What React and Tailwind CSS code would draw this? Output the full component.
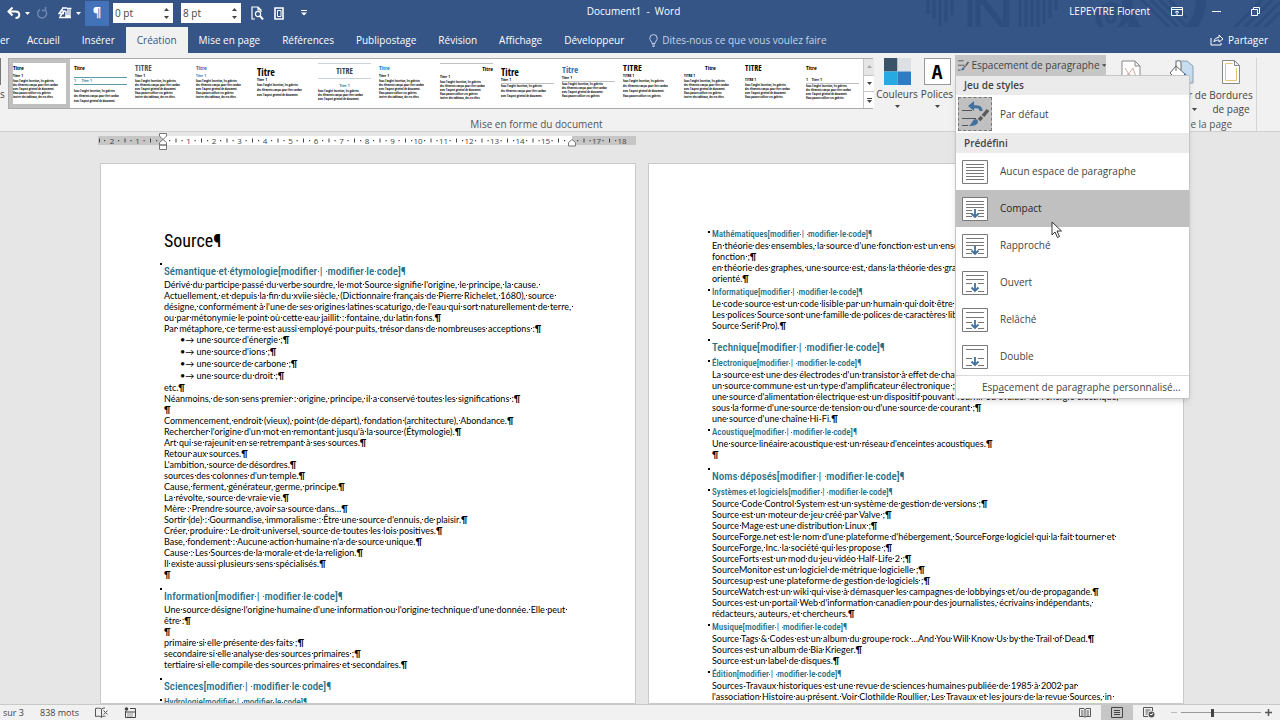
import { Fragment } from "react";
import clsx from "clsx";

const TABS = ["Accueil", "Insérer", "Création", "Mise en page", "Références", "Publipostage", "Révision", "Affichage", "Développeur"];

const SAMPLE = [
  "Sous l'onglet Insertion, les galeries",
  "des éléments conçus pour être cordon",
  "avec l'aspect général de document.",
  "Vous pouvez utiliser ces galeries",
  "insérer des tableaux, des en-têtes",
];

const STYLES = [
  { title: "Titre", t: "text-[6px]", sub: "Titre 1", selected: true },
  { title: "Titre", t: "text-[6px]", sub: "1      Titre 1", s: "border-y border-[#5b9aa8] text-[#2e7a93] mt-1 mb-1", rows: 3, loose: true },
  { title: "TITRE", t: "text-[8px] text-[#44546a]", sub: "Titre 1" },
  { title: "Titre", t: "text-[6px] text-[#2e74b5]", sub: "Titre 1", s: "text-[#2e74b5]" },
  { title: "Titre", t: "mt-1 text-[10px]", sub: "Titre 1", rows: 3, loose: true },
  { title: "TITRE", t: "text-[8px] text-center border-y border-[#c9d5de] py-0.5 text-[#333f50]", sub: "Titre 1", s: "text-center text-[#2e7a93] mt-1", rows: 3 },
  { title: "Titre", t: "text-[6px] text-[#2e74b5]", sub: "Titre 1" },
  { title: "Titre", t: "text-[6px] text-right border-t border-[#c0c0c0]", sub: "Titre 1", rows: 5 },
  { title: "Titre", t: "mt-1 text-[10px]", sub: "Titre 1", s: "border-b border-[#c0c0c0]", rows: 3, loose: true },
  { title: "Titre", t: "mt-0.5 text-[9px] text-[#2e74b5]", sub: "Titre 1", s: "border-b border-[#c0c0c0]", rows: 4 },
  { title: "TITRE", t: "text-[9px]", sub: "TITRE 1", rows: 4, loose: true },
  { title: "Titre", t: "text-[6px] text-center", sub: "TITRE 1" },
  { title: "TITRE", t: "text-[8px]", sub: "TITRE 1", s: "mt-1", rows: 4 },
  { title: "Titre", t: "text-[6px]", sub: "1    Titre 1", s: "mt-1 border-b border-[#c0c0c0]", rows: 4 },
];

const EDIT = "[modifier |\u00a0 modifier le code]";

const PAGE_1 = [
  ["h1", "Source"],
  ["h2", "Sémantique et étymologie" + EDIT],
  ["l", "Dérivé du participe passé du verbe sourdre, le mot Source signifie l'origine, le principe, la cause. "],
  ["l", "Actuellement, et depuis la fin du xviie siècle, (Dictionnaire français de Pierre Richelet, 1680), source "],
  ["l", "désigne, conformément à l'une de ses origines latines scaturigo, de l'eau qui sort naturellement de terre, "],
  ["p", "ou par métonymie le point où cette eau jaillit : fontaine, du latin fons."],
  ["p", "Par métaphore, ce terme est aussi employé pour puits, trésor dans de nombreuses acceptions :"],
  ["li", "une source d'énergie ;"],
  ["li", "une source d'ions ;"],
  ["li", "une source de carbone ;"],
  ["li", "une source du droit ;"],
  ["p", "etc."],
  ["p", "Néanmoins, de son sens premier : origine, principe, il a conservé toutes les significations :"],
  ["p", ""],
  ["p", "Commencement, endroit (vieux), point (de départ), fondation (architecture), Abondance."],
  ["p", "Rechercher l'origine d'un mot en remontant jusqu'à la source (Étymologie)."],
  ["p", "Art qui se rajeunit en se retrempant à ses sources."],
  ["p", "Retour aux sources."],
  ["p", "L'ambition, source de désordres."],
  ["p", "sources des colonnes d'un temple."],
  ["p", "Cause, ferment, générateur, germe, principe."],
  ["p", "La révolte, source de vraie vie."],
  ["p", "Mère : Prendre source, avoir sa source dans…"],
  ["p", "Sortir (de) : Gourmandise, immoralisme : Être une source d'ennuis, de plaisir."],
  ["p", "Créer, produire : Le droit universel, source de toutes les lois positives."],
  ["p", "Base, fondement : Aucune action humaine n'a de source unique."],
  ["p", "Cause : Les Sources de la morale et de la religion."],
  ["p", "Il existe aussi plusieurs sens spécialisés."],
  ["p", ""],
  ["h2", "Information" + EDIT],
  ["l", "Une source désigne l'origine humaine d'une information ou l'origine technique d'une donnée. Elle peut "],
  ["p", "être :"],
  ["p", ""],
  ["p", "primaire si elle présente des faits ;"],
  ["p", "secondaire si elle analyse des sources primaires ;"],
  ["p", "tertiaire si elle compile des sources primaires et secondaires."],
  ["h2", "Sciences" + EDIT],
  ["h3", "Hydrologie" + EDIT],
];

const PAGE_2 = [
  ["h3", "Mathématiques" + EDIT],
  ["l", "En théorie des ensembles, la source d'une fonction est un ensemble de départ de cette "],
  ["p", "fonction ;"],
  ["l", "en théorie des graphes, une source est, dans la théorie des graphes, un sommet d'un graphe "],
  ["p", "orienté."],
  ["h3", "Informatique" + EDIT],
  ["l", "Le code source est un code lisible par un humain qui doit être traduit en code machine."],
  ["l", "Les polices Source sont une famille de polices de caractères libres (Source Sans Pro, "],
  ["p", "Source Serif Pro)."],
  ["h2", "Technique" + EDIT],
  ["h3", "Électronique" + EDIT],
  ["l", "La source est une des électrodes d'un transistor à effet de champ. Un montage "],
  ["p", "un source commune est un type d'amplificateur électronique ;"],
  ["l", "une source d'alimentation électrique est un dispositif pouvant fournir ou évaluer de l'énergie électrique, "],
  ["p", "sous la forme d'une source de tension ou d'une source de courant ;"],
  ["p", "une source d'une chaîne Hi-Fi."],
  ["h3", "Acoustique" + EDIT],
  ["p", "Une source linéaire acoustique est un réseau d'enceintes acoustiques."],
  ["p", ""],
  ["h2", "Noms déposés" + EDIT],
  ["h3", "Systèmes et logiciels" + EDIT],
  ["p", "Source Code Control System est un système de gestion de versions ;"],
  ["p", "Source est un moteur de jeu créé par Valve ;"],
  ["p", "Source Mage est une distribution Linux ;"],
  ["l", "SourceForge.net est le nom d'une plateforme d'hébergement, SourceForge logiciel qui la fait tourner et "],
  ["p", "SourceForge, Inc. la société qui les propose ;"],
  ["p", "SourceForts est un mod du jeu vidéo Half-Life 2 ;"],
  ["p", "SourceMonitor est un logiciel de métrique logicielle ;"],
  ["p", "Sourcesup est une plateforme de gestion de logiciels ;"],
  ["p", "SourceWatch est un wiki qui vise à démasquer les campagnes de lobbyings et/ou de propagande."],
  ["l", "Sources est un portail Web d'information canadien pour des journalistes, écrivains indépendants, "],
  ["p", "rédacteurs, auteurs, et chercheurs."],
  ["h3", "Musique" + EDIT],
  ["p", "Source Tags & Codes est un album du groupe rock …And You Will Know Us by the Trail of Dead."],
  ["p", "Sources est un album de Bia Krieger."],
  ["p", "Source est un label de disques."],
  ["h3", "Édition" + EDIT],
  ["l", "Sources-Travaux historiques est une revue de sciences humaines publiée de 1985 à 2002 par "],
  ["l", "l'association Histoire au présent. Voir Clothilde Roullier, Les Travaux et les jours de la revue Sources, in "],
  ["p", "La Revue des revues, n° 47 [archive], Paris, Entrevues, 2012, p. 42-59."],
];

const SPACINGS = [
  { label: "Aucun espace de paragraphe", lines: [4, 7, 10, 13, 16, 19] },
  { label: "Compact", lines: [4, 7, 10], split: [13, 16, 19] },
  { label: "Rapproché", lines: [4, 8, 11], split: [15, 19] },
  { label: "Ouvert", lines: [4, 8], split: [12, 20] },
  { label: "Relâché", lines: [4, 9], split: [14, 20] },
  { label: "Double", lines: [4], split: [13, 20] },
];

// Text with the formatting marks shown: a dot on each space, a pilcrow at the end
function Marked({ text, end = true }) {
  return (
    <>
      {text.split(" ").map((word, i) => (
        <Fragment key={i}>
          {i > 0 && (
            <span className="bg-[linear-gradient(currentColor,currentColor)] bg-[length:1px_1px] bg-center bg-no-repeat"> </span>
          )}
          {word}
        </Fragment>
      ))}
      {end && <b>¶</b>}
    </>
  );
}

function Block({ type, text }) {
  if (type === "h1") {
    return <h1 className="font-['Roboto_Condensed','Roboto',sans-serif] text-[18px] leading-7"><Marked text={text} /></h1>;
  }
  if (type === "h2") {
    return (
      <h2 className="relative mt-2 pt-0.5 font-['Roboto_Condensed','Roboto',sans-serif] text-[11px] leading-[14px] font-medium text-[#2b6f86]">
        <span className="absolute -left-1 top-0 size-0.5 bg-black" />
        <Marked text={text} />
      </h2>
    );
  }
  if (type === "h3") {
    return (
      <h3 className="relative mt-px pt-0.5 font-['Roboto_Condensed','Roboto',sans-serif] text-[9px] leading-[11px] font-medium text-[#2b6f86]">
        <span className="absolute -left-1 top-1 size-0.5 bg-black" />
        <Marked text={text} />
      </h3>
    );
  }
  if (type === "li") {
    return <p className="pl-4 leading-3">•→ <Marked text={text} /></p>;
  }
  return <p className="leading-[11px]"><Marked text={text} end={type === "p"} /></p>;
}

function Page({ blocks, className }) {
  return (
    <article className={clsx("w-[536px] shrink-0 overflow-hidden border border-[#c9c9c9] bg-white pl-[63px] whitespace-pre text-black font-['Lato',sans-serif] text-[9px]", className)}>
      {blocks.map(([type, text], i) => <Block key={i} type={type} text={text} />)}
    </article>
  );
}

function Caret({ className }) {
  return (
    <svg viewBox="0 0 5 3" className={clsx("h-[3px] w-[5px]", className)} fill="currentColor">
      <path d="M0 0h5L2.500 3z" />
    </svg>
  );
}

function Spin({ label, value }) {
  return (
    <div className="flex h-5 w-[60px] bg-white text-[#444]">
      <input aria-label={label} defaultValue={value} className="w-full min-w-0 pl-0.5 text-[10px] outline-none" />
      <div className="flex w-3.5 shrink-0 flex-col items-center justify-around py-0.5">
        <button aria-label={`Augmenter ${label}`}><Caret className="rotate-180" /></button>
        <button aria-label={`Diminuer ${label}`}><Caret /></button>
      </div>
    </div>
  );
}

function TitleArt() {
  return (
    <svg className="absolute top-0 right-0 h-[42px] w-[360px]" viewBox="0 0 360 42" fill="none" stroke="#2d4d7f">
      <path d="M8 0v14M14 0v19M20 0v26M26 0v22M32 0v15" strokeWidth="3" />
      <path d="M50 0v28M58 0v28" strokeWidth="5" />
      <path d="M62 0l24 30V0" strokeWidth="6" />
      <path d="M100 0v30M106 0v30M112 0v30M118 0v28M124 0v24M130 0v18M136 0v10" strokeWidth="3" />
      <circle cx="191" cy="18" r="13" strokeWidth="5" />
      <circle cx="191" cy="18" r="4" strokeWidth="3" />
      <path d="M207 0c0 24 14 40 36 40s38-18 38-40" strokeWidth="10" />
      <path d="M222 0l34 34M231 0l30 30M240 0l25 25M249 0l18 18" strokeWidth="3" />
      <path d="M312 30L342 0M318 34L352 0M326 36L360 2M336 36l24-24" strokeWidth="3" />
    </svg>
  );
}

function TitleBar() {
  return (
    <header className="relative flex h-[27px] items-center bg-[#355587] text-white">
      <TitleArt />
      <div className="relative flex flex-1 items-center pb-px pl-[7px]">
        <button aria-label="Annuler" className="mr-1">
          <svg viewBox="0 0 14 12" className="h-3 w-3.5" fill="none" stroke="currentColor" strokeWidth="2">
            <path d="M5.500 0.500L1.500 4.500l4 4M2 4.500h6.500c5 0 5 6.500 0 6.500" />
          </svg>
        </button>
        <Caret />
        <button aria-label="Rétablir" className="ml-1.5 text-[#6f88b0]">
          <svg viewBox="0 0 12 12" className="size-3" fill="none" stroke="currentColor" strokeWidth="1.500">
            <path d="M4 2.500a4.500 4.500 0 1 0 5 .5M9.500 0v3.500H6" />
          </svg>
        </button>
        <button aria-label="Espacement" className="mr-1 ml-2.5">
          <svg viewBox="0 0 14 12" className="h-3 w-3.5" fill="none" stroke="currentColor" strokeWidth="1.400">
            <path d="M4 1h5M2.500 4h5M1 10.500h12M5 1L1 6.500h5M2 9.500l4-5M8 4v5h4V2.500M10 2.500v6.500M9 1.500h4.500" />
          </svg>
        </button>
        <Caret />
        <button aria-label="Afficher tout" className="ml-1 flex h-[25px] w-6 items-center justify-center bg-[#4472b8] text-[13px] font-bold">¶</button>
        <div className="ml-1 flex gap-2">
          <Spin label="Espace avant" value="0 pt" />
          <Spin label="Espace après" value="8 pt" />
        </div>
        <button aria-label="Aperçu" className="ml-2.5">
          <svg viewBox="0 0 13 14" className="h-3.5 w-[13px]" fill="none" stroke="currentColor" strokeWidth="1.200">
            <path d="M4 13H1V1h6l3 3v2M7 1v3h3" />
            <circle cx="7" cy="8" r="2.600" />
            <path d="M9 10l3 3.500" strokeWidth="2" />
          </svg>
        </button>
        <button aria-label="Une page" className="ml-2.5">
          <svg viewBox="0 0 11 13" className="h-[13px] w-[11px]" fill="none" stroke="currentColor">
            <path d="M1 1h8v11H1z" strokeWidth="1.600" />
            <path d="M3.500 3.500h3.500v6H3.500z" />
          </svg>
        </button>
        <button aria-label="Personnaliser" className="ml-4">
          <svg viewBox="0 0 6 6" className="size-1.5" fill="currentColor"><path d="M0 0h6v1H0zM0 2.500h6L3 5.500z" /></svg>
        </button>
      </div>
      <p className="relative pb-1 text-[10px]">Document1&nbsp; -&nbsp; Word</p>
      <div className="relative flex flex-1 items-center justify-end pr-5 pb-1 text-[10px]">
        <span>LEPEYTRE Florent</span>
        <button aria-label="Options du ruban" className="ml-[21px]">
          <svg viewBox="0 0 12 9" className="h-[9px] w-3" fill="none" stroke="currentColor">
            <path d="M.5.5h11v8H.5zM.5 2.500h11M6 8V4M4 5.500L6 4l2 1.500" />
          </svg>
        </button>
        <button aria-label="Réduire" className="ml-[29px]">
          <svg viewBox="0 0 9 9" className="size-[9px]" stroke="currentColor"><path d="M0 4.500h9" /></svg>
        </button>
        <button aria-label="Restaurer" className="ml-[30px]">
          <svg viewBox="0 0 9 9" className="size-[9px]" fill="none" stroke="currentColor"><path d="M.5 2.500h6v6h-6zM2.500 2.500v-2h6v6h-2" /></svg>
        </button>
      </div>
    </header>
  );
}

function TabBar() {
  return (
    <nav className="relative flex h-[26px] items-stretch bg-[#355587] text-[10px] text-white">
      <button className="w-4 text-left">er</button>
      {TABS.map((tab) => (
        <button key={tab} className={clsx("px-[11px]", tab === "Création" && "bg-[#f1f1f1] text-[#355587]")}>{tab}</button>
      ))}
      <button className="ml-3.5 flex items-center gap-1 text-[#c5d3ea]">
        <svg viewBox="0 0 9 13" className="h-[13px] w-[9px]" fill="none" stroke="currentColor">
          <path d="M3 9.500C3 7.500.8 6.500.8 4.300a3.700 3.700 0 0 1 7.400 0C8.200 6.500 6 7.500 6 9.500zM3 11h3M3.500 12.500h2" />
        </svg>
        Dites-nous ce que vous voulez faire
      </button>
      <button className="mr-3 ml-auto flex items-center gap-1">
        <svg viewBox="0 0 14 12" className="h-3 w-3.5" fill="none" stroke="currentColor">
          <path d="M1 4v7h10V9M4 8c0-3 2-4.500 5-4.500V1L13 5 9 8V6C7 6 5 6.500 4 8z" />
        </svg>
        Partager
      </button>
    </nav>
  );
}

function StyleThumb({ style }) {
  return (
    <button
      aria-label={`Jeu de styles ${style.title}`}
      className={clsx("h-full w-[61px] shrink-0 border-4 text-left whitespace-pre", style.selected ? "border-[#c0c0c0]" : "border-transparent")}
    >
      <div className="flex h-full flex-col text-black">
        <p className={clsx("leading-[10px]", style.t)}>{style.title}</p>
        <p className={clsx("text-[4px] leading-[6px]", style.s)}>{style.sub}</p>
        <div className={clsx("text-[3px]", style.loose ? "leading-[5px]" : "leading-[4px]")}>
          {SAMPLE.slice(0, style.rows).map((line) => <p key={line}>{line}</p>)}
        </div>
      </div>
    </button>
  );
}

function PageTool({ label, sub, caret, children }) {
  return (
    <button className="flex w-[50px] flex-col items-center leading-[14px] whitespace-nowrap">
      <span className="mb-0.5 flex h-7 items-center">{children}</span>
      <span>{label}</span>
      <span className="flex items-center gap-1">{sub}{caret && <Caret />}</span>
    </button>
  );
}

function BrushIcon({ className }) {
  return (
    <svg viewBox="0 0 28 28" className={className} fill="none">
      <path d="M2 4.500h13M2 14.500h14M2 25.500h6" stroke="#555" strokeWidth="2" />
      <path d="M26 7l-6 8M19 16l-3 3" stroke="#595959" strokeWidth="3.500" />
      <path d="M8 26c3-1 3-6 6-7 3 0 4 3 2 5s-5 2-8 2z" fill="#41719c" />
    </svg>
  );
}

function SpacingIcon({ lines, split = [] }) {
  return (
    <svg viewBox="0 0 26 24" className="h-6 w-[26px] shrink-0" fill="none">
      <path d="M.5.5h25v23H.5z" fill="#fff" stroke="#7a7a7a" />
      {lines.map((y) => <path key={y} d={`M4 ${y + 0.5}h18`} stroke="#777" />)}
      {split.map((y) => <path key={y} d={`M4 ${y + 0.5}h6M16 ${y + 0.5}h6`} stroke="#777" />)}
      {split.length > 0 && <path d="M13 12v8M9.500 16.500L13 20l3.500-3.500" stroke="#41719c" strokeWidth="1.800" />}
    </svg>
  );
}

function SpacingMenu() {
  return (
    <div className="absolute top-full left-0 z-20 w-[235px] border border-[#c6c6c6] bg-white text-[10px] text-[#444] shadow-md">
      <h3 className="bg-[#ebebeb] px-2 leading-[19px] font-semibold">Jeu de styles</h3>
      <button className="flex h-[38px] w-full items-center gap-2 px-0.5 text-left">
        <span className="flex size-[34px] items-center justify-center border border-dashed border-[#777] bg-[#c0c0c0]">
          <svg viewBox="0 0 28 28" className="size-7" fill="none">
            <path d="M1 10.500h10M1 18.500h14M1 25.500h6" stroke="#555" />
            <path d="M27 10l-5 6M21 17l-3 3" stroke="#595959" strokeWidth="3.500" />
            <path d="M7 26c4-1 4-6 7-7 3 0 4 3 2 5s-6 2-9 2z" fill="#41719c" />
            <path d="M20 11c0-4-3-5-9-4" stroke="#41719c" strokeWidth="3" />
            <path d="M13 1v10L7 6z" fill="#41719c" />
          </svg>
        </span>
        Par défaut
      </button>
      <h3 className="bg-[#ebebeb] px-2 leading-5 font-semibold">Prédéfini</h3>
      {SPACINGS.map((item) => (
        <button
          key={item.label}
          className={clsx("flex h-[37px] w-full items-center gap-3 px-1.5 text-left", item.label === "Compact" && "bg-[#c0c0c0] text-[#262626]")}
        >
          <SpacingIcon lines={item.lines} split={item.split} />
          {item.label}
        </button>
      ))}
      <button className="h-[23px] w-full border-t border-[#dadada] pl-[26px] text-left whitespace-nowrap">
        Esp<u>a</u>cement de paragraphe personnalisé...
      </button>
      <svg viewBox="0 0 12 18" className="absolute top-[145px] left-[95px] h-[18px] w-3" fill="#fff" stroke="#333">
        <path d="M1 1v13l3-3 2.500 5.500 2-1L6 10h4.500z" />
      </svg>
    </div>
  );
}

function Ribbon() {
  return (
    <section className="flex h-[79px] border-b border-[#d0d0d0] bg-[#f1f1f1] pt-[5px] text-[10px] text-[#444]">
      <div className="w-2 shrink-0">
        <div className="mb-0.5 h-[27px] w-px bg-[#777]" />
        <p className="leading-[14px]">s</p>
      </div>
      <div className="flex w-[865px] shrink-0 flex-col">
        <div className="flex h-[51px] border border-[#ababab] bg-white font-['Open_Sans_Condensed',sans-serif]">
          <div className="flex flex-1">
            {STYLES.map((style, i) => <StyleThumb key={i} style={style} />)}
          </div>
          <div className="flex w-[11px] shrink-0 flex-col divide-y divide-[#c6c6c6] border-l border-[#c6c6c6] bg-white">
            <button aria-label="Précédent" className="flex flex-1 items-center justify-center bg-[#e6e6e6] text-[#aaa]"><Caret className="rotate-180" /></button>
            <button aria-label="Suivant" className="flex flex-1 items-center justify-center"><Caret /></button>
            <button aria-label="Autres" className="flex flex-1 flex-col items-center justify-center gap-px"><i className="h-px w-[5px] bg-[#444]" /><Caret /></button>
          </div>
        </div>
        <p className="mt-auto ml-48 text-center leading-[14px] text-[#555]">Mise en forme du document</p>
      </div>
      <div className="flex flex-1 justify-between">
        <div className="flex">
          <button className="flex w-[46px] flex-col items-center pl-0.5">
            <svg viewBox="0 0 27 27" className="mb-0.5 size-[27px] shrink-0">
              <path d="M0 0h13.500v13.500H0z" fill="#3b5368" />
              <path d="M13.500 0H27v13.500H13.500z" fill="#dfe0e4" />
              <path d="M0 13.500h13.500V27H0z" fill="#27aae1" />
              <path d="M13.500 13.500H27V27H13.500z" fill="#2e7dc4" />
            </svg>
            <span className="leading-[14px]">Couleurs</span>
            <Caret className="mt-1" />
          </button>
          <button className="flex w-9 flex-col items-center">
            <span className="mb-0.5 flex size-[27px] shrink-0 items-center justify-center border border-[#999] bg-white text-[20px] text-black font-['Open_Sans_Condensed',sans-serif]">A</span>
            <span className="leading-[14px]">Polices</span>
            <Caret className="mt-1" />
          </button>
          <div className="relative -mt-[3px] h-5">
            <button className="flex h-5 w-[151px] items-center gap-0.5 bg-[#c6c6c6] pl-0.5 whitespace-nowrap">
              <BrushIcon className="size-3.5" />
              Espacement de paragraphe
              <Caret />
            </button>
            <SpacingMenu />
          </div>
        </div>
        <div className="mr-[23px] flex flex-col border-r border-[#d5d5d5]">
          <div className="flex">
            <PageTool label="Filigrane" caret>
              <svg viewBox="0 0 20 24" className="h-6 w-5" fill="none" stroke="#888">
                <path d="M1 1h13l5 5v17H1zM14 1v5h5" fill="#fff" />
                <path d="M4 19l8-11 3 9M6 14l9 3M4 8l5 8" stroke="#d3a9a0" />
              </svg>
            </PageTool>
            <PageTool label="Couleur de" sub="page" caret>
              <svg viewBox="0 0 26 24" className="h-6 w-[26px]" fill="none" stroke="#666">
                <path d="M7 1h12l6 5v17H10" fill="#c8dcf0" stroke="#8aa0b5" />
                <path d="M8 6l9 8-7 7-8-8zM8 11V3c0-3 5-3 5 0v7" fill="#fff" />
                <path d="M17 14l2 5" stroke="#2e74b5" strokeWidth="2" />
              </svg>
            </PageTool>
            <PageTool label="Bordures" sub="de page">
              <svg viewBox="0 0 18 24" className="h-6 w-[18px]" fill="none" stroke="#888">
                <path d="M.5.500h12l5 5v18H.5zM12.500.500v5h5" fill="#fff" />
                <path d="M3.500 3.500h7M3.500 3.500v17h11V8" stroke="#e3c27a" />
              </svg>
            </PageTool>
          </div>
          <p className="mt-auto pr-6 text-right leading-[14px] text-[#555]">Arrière-plan de la page</p>
        </div>
      </div>
    </section>
  );
}

function Ruler() {
  const cells = Array.from({ length: 21 }, (_, i) => i - 2);
  return (
    <svg viewBox="0 0 538 18" className="ml-[98px] block h-[18px] w-[538px] shrink-0">
      <path d="M0 3h538v9H0z" fill="#c6c6c6" />
      <path d="M65 3h409v9H65z" fill="#fff" />
      {cells.map((n) => {
        const x = 65 + n * 25.5;
        return (
          <g key={n} fill="#444">
            {n !== 0 && n !== 16 && <text x={x} y="11" textAnchor="middle" className="text-[8px]">{Math.abs(n)}</text>}
            {n < 18 && <path d={`M${x + 6} 7h1.200v1.200h-1.200zM${x + 12.500} 5.500h1v4h-1zM${x + 18.500} 7h1.200v1.200h-1.200z`} />}
          </g>
        );
      })}
      <path d="M1 5.500h1v4H1zM6 7h1.200v1.200H6z" fill="#444" />
      <path d="M61.500.5h7v2.500L65 6.500 61.500 3zM61.500 12V9.500L65 6.500l3.500 3V12zM61.500 12h7v4.500h-7z" fill="#fff" stroke="#777" />
      <path d="M470.500 13v-3.500L474 6.500l3.500 3V13z" fill="#fff" stroke="#777" />
    </svg>
  );
}

function StatusBar() {
  return (
    <footer className="flex h-4 items-center border-t border-[#c9c9c9] bg-[#f1f1f1] pl-[3px] text-[9px] text-[#444]">
      <span>sur 3</span>
      <span className="ml-4">838 mots</span>
      <button aria-label="Vérification" className="ml-4">
        <svg viewBox="0 0 13 11" className="h-[11px] w-[13px]" fill="none" stroke="#555">
          <path d="M6.500 2v8.500M6.500 2C5 1 3 1 .5 1.500v8c2.500-.5 4.500-.5 6 .8 1-1 2-1.200 4-1.200M6.500 2c1-.8 2-1 3.500-1M8.500 3.500l4 4M12.500 3.500l-4 4" />
        </svg>
      </button>
      <button aria-label="Macro" className="ml-4">
        <svg viewBox="0 0 12 11" className="h-[11px] w-3" fill="none" stroke="#444">
          <path d="M1.500 4v6.500h10v-9H6M2 5h9" /><circle cx="2.500" cy="2" r="1.800" fill="#444" stroke="none" />
          <path d="M3.500 7h6M3.500 9h6" strokeDasharray="1 1" />
        </svg>
      </button>
      <div className="ml-auto flex h-full items-center pr-2">
        <button aria-label="Mode Lecture" className="mr-2.5">
          <svg viewBox="0 0 12 11" className="h-[11px] w-3" fill="none" stroke="#555">
            <path d="M.5 1.500H5l1 1 1-1h4.500v8H7l-1 1-1-1H.5zM6 2v8M2 4h2.500M2 6h2.500M2 8h2.500M7.500 4H10M7.500 6H10M7.500 8H10" />
          </svg>
        </button>
        <button aria-label="Page" className="flex h-full w-8 items-center justify-center bg-[#c6c6c6]">
          <svg viewBox="0 0 12 11" className="h-[11px] w-3" fill="none" stroke="#444"><path d="M.5.5h11v10H.5zM3 3.500h6M3 5.500h6M3 7.500h6" /></svg>
        </button>
        <button aria-label="Web" className="mr-4 ml-2.5">
          <svg viewBox="0 0 12 11" className="h-[11px] w-3" fill="none" stroke="#555">
            <path d="M5 9.500H.5v-9h9V4M2.500 3h5M2.500 5h3M2.500 7h2" /><circle cx="8.500" cy="7.500" r="3" fill="#555" stroke="none" /><path d="M7 7.500h2l1-1.500" stroke="#fff" />
          </svg>
        </button>
        <button aria-label="Zoom arrière" className="h-px w-1.5 bg-[#bbb]" />
        <input
          type="range"
          aria-label="Zoom"
          min="0"
          max="100"
          defaultValue="39"
          className="mx-1 h-2.5 w-20 appearance-none bg-[linear-gradient(#999,#999)] bg-[length:100%_1px] bg-center bg-no-repeat [&::-webkit-slider-thumb]:h-2 [&::-webkit-slider-thumb]:w-[3px] [&::-webkit-slider-thumb]:appearance-none [&::-webkit-slider-thumb]:bg-[#444]"
        />
        <button aria-label="Zoom avant">
          <svg viewBox="0 0 7 7" className="size-[7px]" stroke="#555" strokeWidth="1.500"><path d="M0 3.500h7M3.500 0v7" /></svg>
        </button>
      </div>
    </footer>
  );
}

export default function App() {
  return (
    <div className="flex h-screen flex-col overflow-hidden bg-[#e6e6e6] font-['Open_Sans',sans-serif]">
      <TitleBar />
      <TabBar />
      <Ribbon />
      <main className="flex min-h-0 flex-1 flex-col overflow-hidden pt-px">
        <Ruler />
        <div className="mt-3 flex min-h-0 flex-1 justify-center gap-3 pl-1">
          <Page blocks={PAGE_1} className="pt-[63px]" />
          <Page blocks={PAGE_2} className="pt-[62px]" />
        </div>
      </main>
      <StatusBar />
    </div>
  );
}
